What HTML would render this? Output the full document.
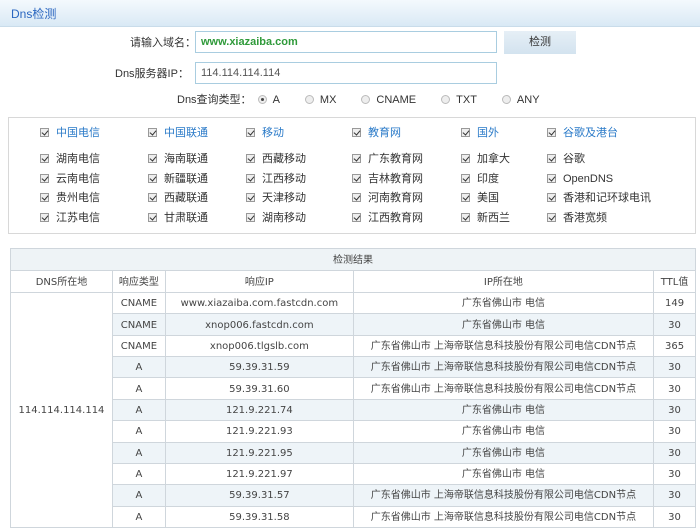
<!DOCTYPE html>
<html><head><meta charset="utf-8"><style>
*{margin:0;padding:0;box-sizing:border-box}
body{width:700px;height:532px;background:#fff;font-family:"Liberation Sans","Noto Sans CJK SC",sans-serif;font-size:11px;color:#333;position:relative;overflow:hidden}
.hd{position:absolute;left:0;top:0;width:700px;height:27px;background:linear-gradient(#f4f9fd,#d9e9f5);border-bottom:1px solid #c9dcea}
.hd span{position:absolute;left:11px;top:6px;color:#2a66c0;font-size:12px;line-height:16px}
.lbl{position:absolute;font-size:11px;color:#333;line-height:14px}
.inp{position:absolute;border:1px solid #a9cde0;background:#fff;height:22px;padding:0 5px;line-height:20px;font-size:11px}
.btn{position:absolute;left:504px;top:31px;width:72px;height:23px;background:linear-gradient(#e6eff6,#d3e3ef);text-align:center;line-height:23px;font-size:11px}
.rad{display:inline-block;width:9px;height:9px;border:1px solid #bbb;border-radius:50%;background:#eee;vertical-align:-1px;margin-right:6px;position:relative}
.rad.on:after{content:"";position:absolute;left:2px;top:2px;width:3px;height:3px;border-radius:50%;background:#444}
.box{position:absolute;left:8px;top:117px;width:688px;height:117px;border:1px solid #d8d8d8}
.cb{position:absolute;font-size:11px;white-space:nowrap;line-height:14px;height:14px}
.cb i{display:inline-block;width:9px;height:9px;border:1px solid #999;background:#eee;margin-right:7px;vertical-align:-1px;position:relative}
.cb i:after{content:"";position:absolute;left:2px;top:0;width:3px;height:5px;border:solid #333;border-width:0 1.5px 1.5px 0;transform:rotate(40deg)}
.cb.b{color:#2a7ac8}
table{position:absolute;left:10px;top:248px;width:686px;border-collapse:collapse;font-family:"DejaVu Sans","Noto Sans CJK SC",sans-serif;font-size:10px;color:#444}
td{border:1px solid #cfd6dc;text-align:center;height:21.36px;padding:0;line-height:20px;vertical-align:middle}
td span{display:inline-block;line-height:20px;height:20px;vertical-align:top;padding-top:1px}
tr.t td{background:#eef3f6;height:22px}
tr.h td{height:22px}
tr.z td.s{background:#eef4f8}
</style></head><body>
<div class="hd"><span>Dns检测</span></div>
<div class="lbl" style="left:130px;top:36px">请输入域名：</div>
<div class="inp" style="left:195px;top:31px;width:302px;color:#2f9a3a;font-weight:bold">www.xiazaiba.com</div>
<div class="btn">检测</div>
<div class="lbl" style="left:115px;top:67px">Dns服务器IP：</div>
<div class="inp" style="left:195px;top:62px;width:302px;color:#555">114.114.114.114</div>
<div class="lbl" style="left:177px;top:93px">Dns查询类型：<span style="margin-left:6px"><span class="rad on"></span>A</span><span style="margin-left:25px"><span class="rad"></span>MX</span><span style="margin-left:25px"><span class="rad"></span>CNAME</span><span style="margin-left:25px"><span class="rad"></span>TXT</span><span style="margin-left:25px"><span class="rad"></span>ANY</span></div>
<div class="box"></div>
<div class="cb b" style="left:40px;top:126px"><i></i>中国电信</div>
<div class="cb b" style="left:148px;top:126px"><i></i>中国联通</div>
<div class="cb b" style="left:246px;top:126px"><i></i>移动</div>
<div class="cb b" style="left:352px;top:126px"><i></i>教育网</div>
<div class="cb b" style="left:461px;top:126px"><i></i>国外</div>
<div class="cb b" style="left:547px;top:126px"><i></i>谷歌及港台</div>

<div class="cb" style="left:40px;top:152px"><i></i>湖南电信</div>
<div class="cb" style="left:148px;top:152px"><i></i>海南联通</div>
<div class="cb" style="left:246px;top:152px"><i></i>西藏移动</div>
<div class="cb" style="left:352px;top:152px"><i></i>广东教育网</div>
<div class="cb" style="left:461px;top:152px"><i></i>加拿大</div>
<div class="cb" style="left:547px;top:152px"><i></i>谷歌</div>

<div class="cb" style="left:40px;top:172px"><i></i>云南电信</div>
<div class="cb" style="left:148px;top:172px"><i></i>新疆联通</div>
<div class="cb" style="left:246px;top:172px"><i></i>江西移动</div>
<div class="cb" style="left:352px;top:172px"><i></i>吉林教育网</div>
<div class="cb" style="left:461px;top:172px"><i></i>印度</div>
<div class="cb" style="left:547px;top:172px"><i></i>OpenDNS</div>

<div class="cb" style="left:40px;top:191px"><i></i>贵州电信</div>
<div class="cb" style="left:148px;top:191px"><i></i>西藏联通</div>
<div class="cb" style="left:246px;top:191px"><i></i>天津移动</div>
<div class="cb" style="left:352px;top:191px"><i></i>河南教育网</div>
<div class="cb" style="left:461px;top:191px"><i></i>美国</div>
<div class="cb" style="left:547px;top:191px"><i></i>香港和记环球电讯</div>

<div class="cb" style="left:40px;top:211px"><i></i>江苏电信</div>
<div class="cb" style="left:148px;top:211px"><i></i>甘肃联通</div>
<div class="cb" style="left:246px;top:211px"><i></i>湖南移动</div>
<div class="cb" style="left:352px;top:211px"><i></i>江西教育网</div>
<div class="cb" style="left:461px;top:211px"><i></i>新西兰</div>
<div class="cb" style="left:547px;top:211px"><i></i>香港宽频</div>

<table>
<colgroup><col style="width:102px"><col style="width:53px"><col style="width:188px"><col style="width:301px"><col style="width:42px"></colgroup>
<tr class="t"><td colspan="5"><span>检测结果</span></td></tr>
<tr class="h"><td><span>DNS所在地</span></td><td><span>响应类型</span></td><td><span>响应IP</span></td><td><span>IP所在地</span></td><td><span>TTL值</span></td></tr>
<tr><td rowspan="11"><span>114.114.114.114</span></td><td class="s"><span>CNAME</span></td><td class="s"><span>www.xiazaiba.com.fastcdn.com</span></td><td class="s"><span>广东省佛山市 电信</span></td><td class="s"><span>149</span></td></tr>
<tr class="z"><td class="s"><span>CNAME</span></td><td class="s"><span>xnop006.fastcdn.com</span></td><td class="s"><span>广东省佛山市 电信</span></td><td class="s"><span>30</span></td></tr>
<tr><td class="s"><span>CNAME</span></td><td class="s"><span>xnop006.tlgslb.com</span></td><td class="s"><span>广东省佛山市 上海帝联信息科技股份有限公司电信CDN节点</span></td><td class="s"><span>365</span></td></tr>
<tr class="z"><td class="s"><span>A</span></td><td class="s"><span>59.39.31.59</span></td><td class="s"><span>广东省佛山市 上海帝联信息科技股份有限公司电信CDN节点</span></td><td class="s"><span>30</span></td></tr>
<tr><td class="s"><span>A</span></td><td class="s"><span>59.39.31.60</span></td><td class="s"><span>广东省佛山市 上海帝联信息科技股份有限公司电信CDN节点</span></td><td class="s"><span>30</span></td></tr>
<tr class="z"><td class="s"><span>A</span></td><td class="s"><span>121.9.221.74</span></td><td class="s"><span>广东省佛山市 电信</span></td><td class="s"><span>30</span></td></tr>
<tr><td class="s"><span>A</span></td><td class="s"><span>121.9.221.93</span></td><td class="s"><span>广东省佛山市 电信</span></td><td class="s"><span>30</span></td></tr>
<tr class="z"><td class="s"><span>A</span></td><td class="s"><span>121.9.221.95</span></td><td class="s"><span>广东省佛山市 电信</span></td><td class="s"><span>30</span></td></tr>
<tr><td class="s"><span>A</span></td><td class="s"><span>121.9.221.97</span></td><td class="s"><span>广东省佛山市 电信</span></td><td class="s"><span>30</span></td></tr>
<tr class="z"><td class="s"><span>A</span></td><td class="s"><span>59.39.31.57</span></td><td class="s"><span>广东省佛山市 上海帝联信息科技股份有限公司电信CDN节点</span></td><td class="s"><span>30</span></td></tr>
<tr><td class="s"><span>A</span></td><td class="s"><span>59.39.31.58</span></td><td class="s"><span>广东省佛山市 上海帝联信息科技股份有限公司电信CDN节点</span></td><td class="s"><span>30</span></td></tr>
</table>
</body></html>
